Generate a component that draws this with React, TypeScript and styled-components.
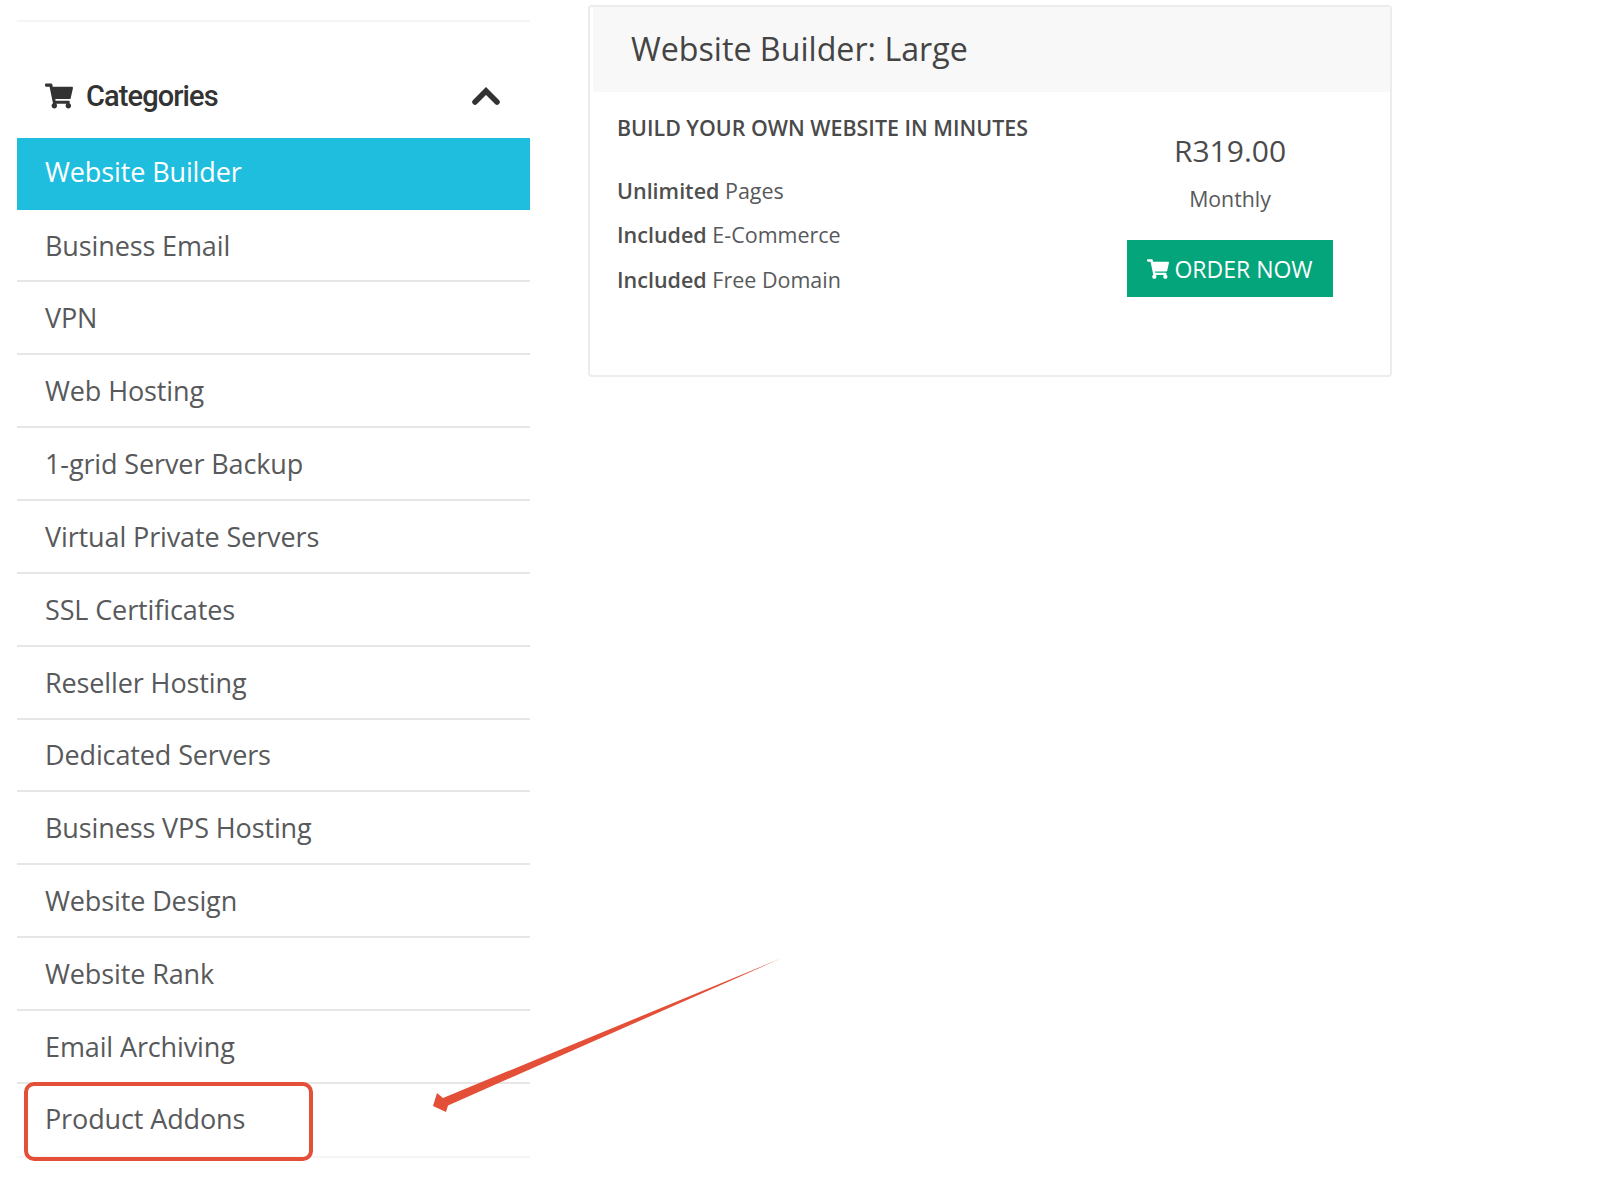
import React from "react";
import styled, { createGlobalStyle } from "styled-components";
import { FaShoppingCart } from "react-icons/fa";

const Global = createGlobalStyle`
  html, body { margin: 0; padding: 0; background: #fff; }
  body { font-family: "Open Sans", "Liberation Sans", sans-serif; color: #58595b; }
`;

const Page = styled.div`
  position: relative;
  width: 1617px;
  height: 1191px;
  overflow: hidden;
  display: flex;
  align-items: flex-start;
  padding-left: 17px;
  box-sizing: border-box;
`;

const Sidebar = styled.aside`
  width: 513px;
  flex: none;
  padding-top: 20px;
  box-sizing: border-box;
`;

const TopRule = styled.div`
  height: 2px;
  background: #f5f5f5;
`;

const SideHeader = styled.div`
  height: 116px;
  padding: 39px 30px 7px 28px;
  box-sizing: border-box;
  display: flex;
  align-items: center;
  color: #333;
  font-family: "Roboto", "Open Sans", sans-serif;
  font-size: 29px;
  font-weight: 500;
  letter-spacing: -0.9px;
  gap: 13px;
`;

const HeaderTitle = styled.span`
  flex: 1;
`;

type RowKind = "active" | "first" | "plain" | "last";

const rowHeights: Record<RowKind, string> = {
  active: "72px",
  first: "72.45px",
  plain: "72.85px",
  last: "74.45px",
};

const MenuItem = styled.div<{ $kind: RowKind }>`
  height: ${(p) => rowHeights[p.$kind]};
  box-sizing: border-box;
  padding: 0 28px;
  padding-bottom: ${(p) => (p.$kind === "active" ? "6px" : p.$kind === "last" ? "3px" : "0")};
  display: flex;
  align-items: center;
  font-size: 27px;
  letter-spacing: -0.12px;
  color: ${(p) => (p.$kind === "active" ? "#fff" : "#58595b")};
  background: ${(p) => (p.$kind === "active" ? "#20bede" : "transparent")};
  border-bottom: ${(p) =>
    p.$kind === "active" ? "none" : p.$kind === "last" ? "2px solid #f5f5f5" : "2px solid #e6e6e6"};
`;

const Card = styled.section`
  width: 804px;
  height: 372px;
  flex: none;
  margin: 5px 0 0 58px;
  border: 2px solid #ececec;
  border-radius: 4px;
  box-sizing: border-box;
  display: flex;
  flex-direction: column;
`;

const CardHeader = styled.div`
  height: 85px;
  flex: none;
  margin-left: 3px;
  padding: 0 0 2px 38px;
  box-sizing: border-box;
  display: flex;
  align-items: center;
  background: #f8f8f8;
  font-size: 32.2px;
  color: #444;
`;

const CardBody = styled.div`
  display: flex;
  flex: 1;
`;

const Features = styled.div`
  width: 500px;
  padding: 21px 0 0 27px;
  box-sizing: border-box;
`;

const Headline = styled.div`
  font-size: 21.4px;
  font-weight: 600;
  line-height: 30px;
  color: #4a4a4a;
  margin-bottom: 33px;
`;

const Feature = styled.div`
  font-size: 21.5px;
  line-height: 30px;
  margin-bottom: 14.4px;
  color: #58595b;
  b {
    font-weight: 600;
    color: #4f4f4f;
  }
`;

const Pricing = styled.div`
  width: 206px;
  margin-left: 37px;
  padding-top: 39px;
  box-sizing: border-box;
  display: flex;
  flex-direction: column;
  align-items: center;
`;

const Price = styled.div`
  font-size: 30px;
  line-height: 40px;
  color: #4a4a4a;
`;

const Period = styled.div`
  font-size: 21.3px;
  line-height: 30px;
  margin-top: 13px;
  margin-bottom: 26px;
`;

const OrderButton = styled.button`
  width: 206px;
  height: 57px;
  border: none;
  background: #04a57b;
  color: #fff;
  font-family: inherit;
  font-size: 23px;
  display: flex;
  align-items: center;
  justify-content: center;
  gap: 5px;
  padding: 0;
`;

const Highlight = styled.div`
  position: absolute;
  left: 24px;
  top: 1082px;
  width: 289px;
  height: 79px;
  border: 4px solid #e34f37;
  border-radius: 10px;
  box-sizing: border-box;
`;

const ArrowLayer = styled.svg`
  position: absolute;
  left: 420px;
  top: 950px;
`;

const items = [
  "Business Email",
  "VPN",
  "Web Hosting",
  "1-grid Server Backup",
  "Virtual Private Servers",
  "SSL Certificates",
  "Reseller Hosting",
  "Dedicated Servers",
  "Business VPS Hosting",
  "Website Design",
  "Website Rank",
  "Email Archiving",
  "Product Addons",
];

const kindOf = (i: number): RowKind => (i === 0 ? "first" : i === items.length - 1 ? "last" : "plain");

export default function App() {
  return (
    <>
      <Global />
      <Page>
        <Sidebar>
          <TopRule />
          <SideHeader>
            <FaShoppingCart size={28} />
            <HeaderTitle>Categories</HeaderTitle>
            <svg width="28" height="18" viewBox="0 0 28 18">
              <path d="M3 15 L14 4 L25 15" fill="none" stroke="#333" strokeWidth="5.5" strokeLinecap="round" strokeLinejoin="miter" />
            </svg>
          </SideHeader>
          <MenuItem $kind="active">Website Builder</MenuItem>
          {items.map((t, i) => (
            <MenuItem key={t} $kind={kindOf(i)}>
              {t}
            </MenuItem>
          ))}
        </Sidebar>
        <Card>
          <CardHeader>Website Builder: Large</CardHeader>
          <CardBody>
            <Features>
              <Headline>BUILD YOUR OWN WEBSITE IN MINUTES</Headline>
              <Feature><b>Unlimited</b> Pages</Feature>
              <Feature><b>Included</b> E-Commerce</Feature>
              <Feature><b>Included</b> Free Domain</Feature>
            </Features>
            <Pricing>
              <Price>R319.00</Price>
              <Period>Monthly</Period>
              <OrderButton>
                <FaShoppingCart size={22} />
                ORDER NOW
              </OrderButton>
            </Pricing>
          </CardBody>
        </Card>
        <Highlight />
        <ArrowLayer width="370" height="170" viewBox="0 0 370 170">
          <path d="M362 8 L23 148 L17 143 L13 156 L26 162 L28 155.5 Z" fill="#e34f37" />
        </ArrowLayer>
      </Page>
    </>
  );
}
